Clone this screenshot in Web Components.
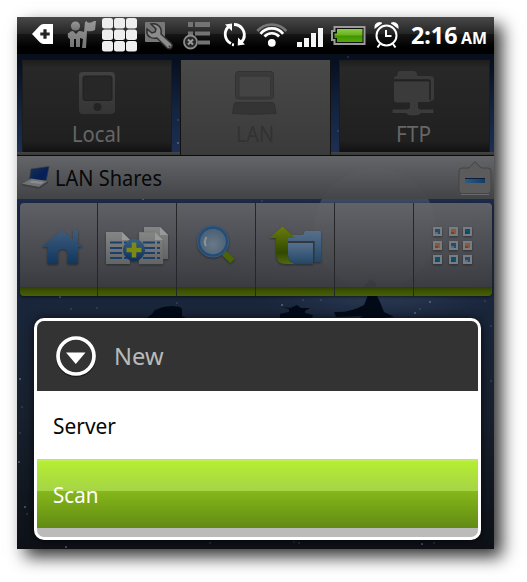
<!DOCTYPE html>
<html lang="en">
<head>
<meta charset="utf-8">
<title>LAN Shares</title>
<style>
html,body{margin:0;background:#fff;height:582px;overflow:hidden}
body{font-family:"Noto Sans","Open Sans",sans-serif}
</style>
</head>
<body>
<phone-screen></phone-screen>
<script>
const define = (name, html, setup) => customElements.define(name, class extends HTMLElement {
  connectedCallback() {
    if (this.shadowRoot) return;
    const root = this.attachShadow({mode: 'open'});
    root.innerHTML = typeof html === 'function' ? html(this) : html;
    if (setup) setup(this, root);
  }
});

/* A single line of text condensed to an exact advance width. */
define('fit-label', el => {
  const w = el.getAttribute('w'), s = el.getAttribute('size') || 22;
  return `<style>:host{display:block;width:${w}px;height:24px;flex:none}svg{display:block;overflow:visible}</style>
  <svg width="${w}" height="24"><text x="0" y="19" fill="currentColor" font-size="${s}" font-weight="${el.getAttribute('weight') || 400}" textLength="${w}" lengthAdjust="spacingAndGlyphs">${el.getAttribute('text')}</text></svg>`;
});

define('wall-paper', () => {
  const stars = [[143,199],[71,309],[97,308],[60,297],[177,303],[126,427],[20,379],[22,407],[20,433],[282,305],[303,300],[321,300],[415,313],[420,309],[485,301],[430,302],[491,326],[491,381],[25,507],[27,514],[210,543],[66,547],[294,542],[299,543],[422,544],[434,543],[262,201],[19,462],[487,223],[178,120],[178,143],[338,131],[348,57]];
  return `<style>:host{display:block}svg{display:block}</style>
  <svg width="477" height="532" viewBox="17 17 477 532">
  <defs><linearGradient id="g" x1="0" y1="0" x2="0" y2="1"><stop offset="0" stop-color="#03060d"/><stop offset=".09" stop-color="#081121"/><stop offset=".17" stop-color="#13233f"/><stop offset=".25" stop-color="#1c2f52"/><stop offset=".36" stop-color="#1b2a48"/><stop offset=".55" stop-color="#192539"/><stop offset=".75" stop-color="#17202d"/><stop offset="1" stop-color="#0d1117"/></linearGradient>
  <radialGradient id="h"><stop offset="0" stop-color="#43536b"/><stop offset=".6" stop-color="#2b3b54" stop-opacity=".6"/><stop offset="1" stop-color="#1b2a48" stop-opacity="0"/></radialGradient></defs>
  <path fill="url(#g)" d="M17 17h477v532H17z"/>
  <ellipse cx="380" cy="260" rx="150" ry="75" fill="url(#h)"/>
  <circle cx="375" cy="229" r="61" fill="#59657a" opacity=".5"/>
  <g fill="#020a18"><path d="M146 319l6-5 3-4 8-3 9-1 8 1 2 2v7l6 3z"/>
  <path d="M280 320v-6l9-2v-3l-7-2 8 1 7-3 4 3 9 0-5 3v2l8 2-3 6z"/>
  <path d="M334 312q16 1 30-7l5-12-6-5 7-9 6 4v4l6 0-6 7 4 8 4 10 10 5-10 1-8 3h-22l9-5-27 1z"/></g>
  <g fill="#8290a4" opacity=".55">${stars.map(([x,y],i)=>`<circle cx="${x}" cy="${y}" r="${i%3?.7:1.1}"/>`).join('')}</g></svg>`;
});

define('status-bar', `<style>
:host{display:flex;height:37px;box-sizing:border-box;background:linear-gradient(#494949,#252525 45%,#161616 46%,#000 82%)}
svg{display:block;flex:none}.time{display:flex;color:#fff;padding-top:8px;gap:4px}
</style>
<svg width="393.500" height="37" viewBox="17 17 393.500 37">
<defs><linearGradient id="b" x1="0" y1="0" x2="0" y2="1"><stop offset="0" stop-color="#8dcc43"/><stop offset=".48" stop-color="#66b01d"/><stop offset=".52" stop-color="#419300"/><stop offset="1" stop-color="#56a90a"/></linearGradient>
<linearGradient id="c" x1="0" y1="0" x2="0" y2="1"><stop offset="0" stop-color="#979797"/><stop offset="1" stop-color="#747474"/></linearGradient></defs>
<path d="M32 34l7.500-8q2-2 4-2H53v20H43.500q-2 0-4-2z" fill="#fff"/><path d="M40.300 34h9.400M45 29.300v9.400" stroke="#242424" stroke-width="3.200"/>
<g fill="url(#c)"><circle cx="75.500" cy="26" r="4.600"/><path d="M69 33q1-2 4-2l3 3 3-3q3 0 5 1l1-10 2-1v1q3 2 7-1h2l-1 9q-4 2-8 1l-1 17h-4l1-9-3-1v9h-4v-8h-2v8h-4v-8q-3-1-2-6z"/></g>
<g fill="#eee"><rect x="102" y="18" width="11" height="10.500" rx="2.500"/><rect x="114" y="18" width="11" height="10.500" rx="2.500"/><rect x="126" y="18" width="11" height="10.500" rx="2.500"/><rect x="102" y="29.500" width="11" height="10.500" rx="2.500"/><rect x="114" y="29.500" width="11" height="10.500" rx="2.500"/><rect x="126" y="29.500" width="11" height="10.500" rx="2.500"/><rect x="102" y="41" width="11" height="10.500" rx="2.500"/><rect x="114" y="41" width="11" height="10.500" rx="2.500"/><rect x="126" y="41" width="11" height="10.500" rx="2.500"/></g>
<rect x="145" y="22" width="20" height="20" rx="1" fill="#777"/>
<path d="M151 24l5 5-1 3-3 1-5-4q-1 6 3 8 3 2 7 1l10 10q3 2 5-1 1-2-1-4l-10-9q1-5-2-8-3-3-8-2z" fill="#8c8c8c" stroke="#303030" stroke-width="1.500"/><circle cx="169.500" cy="46.500" r="1" fill="#333"/>
<g fill="#747474"><path d="M188 22h5v5h-5zM195 22h15v5h-15zM188 31.500h5v4h-5zM195 31.500h15v4h-15zM198 40.500h12v4h-12z"/></g>
<circle cx="190.500" cy="42" r="6.500" fill="#282828" stroke="#8b8b8b" stroke-width="1.800"/><path d="M188 39.500l5 5m0-5l-5 5" stroke="#999" stroke-width="2"/>
<g fill="none" stroke="#fff" stroke-width="2.800"><path d="M231 43.500a10.200 10.200 0 0 1-1.500-17.500M234 24.500a10.200 10.200 0 0 1 9.500 14M232 44.600l2 .3M240 43a10.200 10.200 0 0 0 4.500-7"/></g>
<path fill="#fff" d="M225 24.500l7-1v7.500zM245 44.500l-7.300 1 .4-8z"/>
<circle cx="271.800" cy="42.800" r="3.900" fill="#fff"/><g fill="none" stroke-width="2.700"><path d="M264.500 36.500a9.800 9.800 0 0 1 14.600 0" stroke="#fff"/><path d="M260.500 33.800a14.600 14.600 0 0 1 22.600 0" stroke="#fff"/><path d="M257.300 31a19.400 19.400 0 0 1 29 0" stroke="#777"/></g>
<path fill="#f4f4f4" d="M297 42h5v5h-5zM304 38h5v9h-5zM311 33h5v14h-5zM318 28h5v19h-5z"/>
<path d="M334.500 27h30v17h-30v-4h-2.500v-9h2.500z" fill="#111" stroke="#9b9b9b" stroke-width="2"/><path d="M337 29h25.500v13H337v-4h-2.500v-4.500H337z" fill="url(#b)"/>
<g fill="none" stroke="#fff" stroke-width="2"><circle cx="386.500" cy="35.500" r="10"/><path d="M386 30v6h5.500M380 44l-2.500 3.500M393 44l2.500 3.500"/></g><path fill="#fff" d="M374.500 29q-1-6 5-7 3 0 2.500 1.500zM398.500 29q1-6-5-7-3 0-2.500 1.500z"/>
</svg>
<div class="time"><fit-label text="2:16" w="46.500" size="23" weight="700"></fit-label><fit-label text="AM" w="26" size="16.500" weight="700"></fit-label></div>`);

define('category-tab', el => `<style>
:host{display:flex;flex-direction:column;align-items:center;box-sizing:border-box;height:92px;color:#666;background:linear-gradient(#1d1d1d,#282828 9%,#202020 88%,#111);border:solid #1c1c1c;border-width:0 1px}
:host([active]){color:#323232;height:95px;background:linear-gradient(#494949,#3a3a3a);border-color:#484848 #111}
.icon{height:63px}fit-label{position:relative;left:-.7px}
</style><div class="icon"><slot></slot></div><fit-label text="${el.getAttribute('label')}" w="${el.getAttribute('w')}" size="22"></fit-label>`);

define('tab-strip', `<style>
:host{display:grid;grid-template-columns:150px 151px 151px;gap:8px;padding:6px 0 0 5px;height:102px;box-sizing:border-box;background:linear-gradient(transparent 98px,#454545 98px,#383838 101px,#080b11 101px)}
svg{display:block}
</style>
<category-tab label="Local" w="49"><svg width="60" height="63" viewBox="67 60 60 63">
<defs><linearGradient id="t" x1="0" y1="0" x2="0" y2="1"><stop offset="0" stop-color="#414141"/><stop offset="1" stop-color="#353535"/></linearGradient></defs>
<rect x="79" y="72" width="36" height="42" rx="4" fill="url(#t)"/><rect x="83" y="76" width="29" height="24.500" rx="2" fill="#272727" stroke="#202020"/><circle cx="97.500" cy="107" r="4" fill="#242424"/></svg></category-tab>
<category-tab active label="LAN" w="38"><svg width="60" height="63" viewBox="226 60 60 63"><rect x="235.500" y="71.500" width="38" height="27.500" rx="3" fill="#3a3a3a" stroke="#323232"/><rect x="239" y="76" width="31.500" height="21" fill="#444" stroke="#353535"/><path d="M236 102.500h36q2 0 2.500 2l1.500 9q-21.500 1.500-43.500 0l1.500-9q.5-2 2-2z" fill="#343434" stroke="#303030"/></svg></category-tab>
<category-tab label="FTP" w="35"><svg width="60" height="63" viewBox="385 60 60 63"><path d="M394 78q0-2 3-2l1-4q.5-1 2-1h14q2 0 2.500 1.500l1 3.500h13q3.500 0 3.500 3.500V98q0 3-3 3h-2V80h-35z" fill="#3a3a3a"/><path d="M394 81.500h35.500V102H418v5q0 2 3 2.500h12.500v3.500H421q-2 2.500-7.500 2.500T406 113h-13.500v-3.500H406q4-.5 4-2.500v-4.500h-13q-3 0-3-3z" fill="#3b3b3b"/><path d="M394 80h34q2 0 2 2v18" stroke="#222" stroke-width="1.600" fill="none"/></svg></category-tab>`);

define('share-header', `<style>
:host{display:flex;align-items:flex-start;height:43px;box-sizing:border-box;background:linear-gradient(rgba(104,105,106,.93),rgba(69,69,70,.94));color:#080808}
svg{display:block;flex:none}fit-label{margin-top:11px}.end{margin-left:auto}
</style>
<svg width="38" height="43" viewBox="17 156 38 43"><defs><linearGradient id="s" x1="0" y1="0" x2="1" y2="1"><stop offset="0" stop-color="#1b3350"/><stop offset=".6" stop-color="#061f55"/><stop offset="1" stop-color="#06265e"/></linearGradient></defs><path d="M31 169l18-2.500-3 15-16.500-2z" fill="url(#s)" stroke="#333a44" stroke-width=".6"/><path d="M22 184l9-5.500 17 2.500-9 6z" fill="#707274"/><path d="M22 184l17 3 9-6v2l-9 6-17-3.500z" fill="#3d3e40"/><path d="M29 182.500l3-2 12 1.500-3 2z" fill="#8a8b8c"/></svg>
<fit-label text="LAN Shares" w="107" size="22"></fit-label>
<svg class="end" width="40" height="43" viewBox="454 156 40 43"><defs><linearGradient id="u" x1="0" y1="0" x2="1" y2="0"><stop offset="0" stop-color="#2c5c85"/><stop offset="1" stop-color="#123c66"/></linearGradient></defs><path d="M462 168h7l6-6.500 6 6.500h7q3 0 3 3v19q0 3.500-3.500 3.500h-25q-3.500 0-3.500-3.500v-19q0-3 3-3z" fill="#5b5b5b" stroke="#444"/><path d="M461 194.500h28" stroke="#6a6a6a"/><path fill="url(#u)" d="M465 178h20v5h-20z"/><path d="M465 178.500h20" stroke="#0b2038"/></svg>`);

define('tool-button', `<style>:host{display:block;border-right:1px solid #242628;box-sizing:border-box}:host(:last-child){border:0}</style><slot></slot>`);

define('tool-bar', () => {
  const tint = ['#284a70','#8a5a34','#0d526b'];
  const dots = [0,1,2,1,0,1,2,2,0].map((c,i)=>{const x=[433,449,463][i%3],y=[227,241,255][i/3|0];return `<path d="M${x} ${y}h9v9h-9z" fill="#777d80"/><path d="M${x+2} ${y+2}h5v5h-5z" fill="${tint[c]}"/><path d="M${x+2} ${y+5}h3v2h-3z" fill="${['#4b7188','#8b372e','#123f75'][c]}"/>`}).join('');
  return `<style>
:host{display:grid;grid-template-columns:78px 79px 79px 79px 79px 78px;height:93px;margin:4px 2px 0 3px;border-radius:4px;overflow:hidden;box-shadow:0 1px 3px #0008;background:linear-gradient(rgba(101,101,104,.92),rgba(60,61,64,.92) 84px,#2c3e04 84px,#3d5205 88px,#485f07)}
svg{display:block;filter:drop-shadow(0 1px 1px #0006)}
</style>
<tool-button><svg width="77" height="84" viewBox="20 203 77 84"><defs><linearGradient id="a" x1="0" y1="0" x2="0" y2="1"><stop offset="0" stop-color="#405c7c"/><stop offset="1" stop-color="#10375e"/></linearGradient></defs><path fill="url(#a)" d="M62 230l11 9v-9h5v13l5 4h-5v17H67.500v-10q0-5-4.800-5T58 254v10H47.500v-17H42z"/></svg></tool-button>
<tool-button><svg width="78" height="84" viewBox="98 203 78 84"><defs><linearGradient id="d" x1="0" y1="0" x2="0" y2="1"><stop offset="0" stop-color="#858585"/><stop offset="1" stop-color="#626465"/></linearGradient><linearGradient id="p" x1="0" y1="0" x2="0" y2="1"><stop offset="0" stop-color="#3a5f84"/><stop offset="1" stop-color="#0d305b"/></linearGradient></defs>
<path d="M144 227h16l8 8v24h-24z" fill="url(#d)"/><path d="M160 227v8h8" fill="#999"/>
<path d="M106 232h16l8 8v24h-24z" fill="url(#d)"/><path d="M122 232v8h8z" fill="#999"/><path d="M110 242.500h12m2 0h3M110 248h12m2 0h3M110 253h12m2 0h3M110 258h12m2 0h3" stroke="#1b3f68" stroke-width="2"/>
<path d="M139 232h16l8 8v24h-24z" fill="url(#d)" stroke="#5f5f5f" stroke-width=".4"/><path d="M155 232v8h8z" fill="#999"/><path d="M143 242.500h12m2 0h3M143 248h12m2 0h3M143 253h12m2 0h3M143 258h12m2 0h3" stroke="#1b3f68" stroke-width="2"/>
<circle cx="134" cy="250" r="11" fill="url(#p)"/><path d="M126.500 250h15M134 242.500v15" stroke="#7c8913" stroke-width="4.600"/></svg></tool-button>
<tool-button><svg width="78" height="84" viewBox="177 203 78 84"><defs><radialGradient id="m" cx=".5" cy=".6" r=".65"><stop offset="0" stop-color="#697987"/><stop offset="1" stop-color="#455b71"/></radialGradient></defs><path d="M224 253l8.500 8" stroke="#4a6406" stroke-width="6"/><circle cx="213" cy="241.500" r="14.300" fill="url(#m)" stroke="#214d78" stroke-width="3"/><circle cx="213" cy="241.500" r="15.700" fill="none" stroke="#47627f" stroke-width=".7"/><path d="M206.500 237q-3 5-.5 9" stroke="#8a949c" stroke-width="2" fill="none"/></svg></tool-button>
<tool-button><svg width="78" height="84" viewBox="256 203 78 84"><defs><linearGradient id="f" x1="0" y1="0" x2="0" y2="1"><stop offset="0" stop-color="#56708c"/><stop offset="1" stop-color="#234667"/></linearGradient><linearGradient id="v" x1="0" y1="0" x2="0" y2="1"><stop offset="0" stop-color="#6a7d0d"/><stop offset=".7" stop-color="#324800"/><stop offset="1" stop-color="#526811"/></linearGradient></defs><path d="M288 235h15l2-4h15q1 0 1 1v29q0 1-1 1h-6v-20h-26z" fill="url(#f)"/><path d="M288 243h25v20q0 1-1 1h-16q-8-1-8-10z" fill="url(#f)"/><path d="M288 241.800h26V262" fill="none" stroke="#33393f" stroke-width="1.400"/><path d="M282.500 226.500L295 238h-7v17q0 7 7 9h-9q-10 0-10-10v-16h-7z" fill="url(#v)"/></svg></tool-button>
<tool-button></tool-button>
<tool-button><svg width="78" height="84" viewBox="414 203 78 84">${dots}</svg></tool-button>`;
});

define('menu-item', el => `<style>
:host{display:flex;align-items:flex-start;height:68px;padding:24px 0 0 15.500px;box-sizing:border-box;background:#fff;color:#060606}
:host([selected]){height:69px;padding-top:25px;color:#fff;background:linear-gradient(#c6d5a8 1px,#c3ec68 1px,#b5ed32 3px,#a5d446 32px,#86b71a 32px,#618b14)}
</style><fit-label text="${el.getAttribute('label')}" w="${el.getAttribute('w')}" size="22"></fit-label>`);

define('new-dialog', `<style>
:host{display:block;width:447px;height:222px;margin:22px 0 0 17px;box-sizing:border-box;border:3px solid #fff;border-radius:10px;overflow:hidden;background:#bbb;box-shadow:0 1px 9px #000b}
header{display:flex;height:70px;background:#333;color:#bababa}svg{display:block;flex:none}header fit-label{margin-top:25px}
</style>
<header><svg width="76.500" height="70" viewBox="37 321 76.500 70"><circle cx="76" cy="357" r="18.500" fill="none" stroke="#1c1c1c" stroke-width="3.500"/><circle cx="76" cy="356" r="18" fill="#333" stroke="#fff" stroke-width="3.700"/><path d="M66 352.500h19.500L75.800 364z" fill="#fff"/></svg><fit-label text="New" w="49.500" size="23"></fit-label></header>
<menu-item label="Server" w="63"></menu-item>
<menu-item selected label="Scan" w="45.500"></menu-item>`);

define('phone-screen', `<style>
:host{display:grid;width:477px;height:532px;margin:17px 0 0 17px;box-shadow:8px 8px 16px rgba(0,0,0,.8)}
wall-paper,main{grid-area:1/1}main{position:relative}
</style><wall-paper></wall-paper>
<main><status-bar></status-bar><tab-strip></tab-strip><share-header></share-header><tool-bar></tool-bar><new-dialog></new-dialog></main>`);
</script>
</body>
</html>
